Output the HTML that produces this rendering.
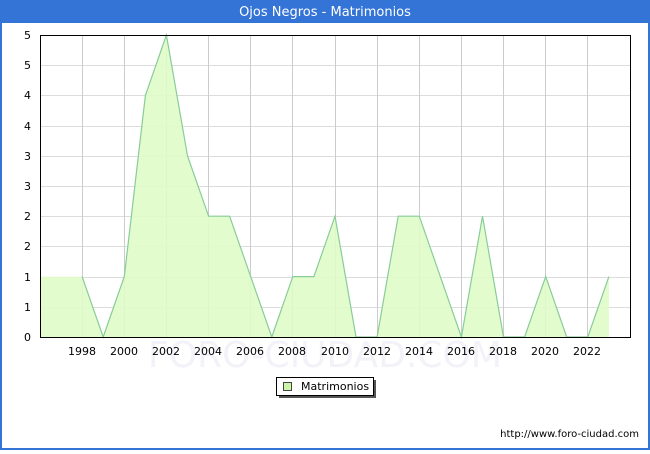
<!DOCTYPE html>
<html><head><meta charset="utf-8"><style>
body{margin:0;width:650px;height:450px;overflow:hidden;background:#fff;font-family:"DejaVu Sans","Liberation Sans",sans-serif}
</style></head><body>
<svg width="650" height="450" xmlns="http://www.w3.org/2000/svg" font-family="DejaVu Sans, Liberation Sans, sans-serif">
<rect x="0" y="0" width="650" height="450" fill="#3374d6"/>
<rect x="2" y="23" width="646" height="425" fill="#fff"/>
<text x="325" y="16" font-size="13" fill="#fff" text-anchor="middle">Ojos Negros - Matrimonios</text>
<text x="325" y="367" font-size="36" fill="#f2f2f8" text-anchor="middle">FORO-CIUDAD.COM</text>
<g stroke="#dcdcdc" stroke-width="1">
<line x1="40" x2="630" y1="307.5" y2="307.5"/><line x1="40" x2="630" y1="277.5" y2="277.5"/><line x1="40" x2="630" y1="246.5" y2="246.5"/><line x1="40" x2="630" y1="216.5" y2="216.5"/><line x1="40" x2="630" y1="186.5" y2="186.5"/><line x1="40" x2="630" y1="156.5" y2="156.5"/><line x1="40" x2="630" y1="126.5" y2="126.5"/><line x1="40" x2="630" y1="95.5" y2="95.5"/><line x1="40" x2="630" y1="65.5" y2="65.5"/>
</g>
<g stroke="#cccccc" stroke-width="1">
<line x1="82.5" x2="82.5" y1="35" y2="337"/><line x1="124.5" x2="124.5" y1="35" y2="337"/><line x1="166.5" x2="166.5" y1="35" y2="337"/><line x1="208.5" x2="208.5" y1="35" y2="337"/><line x1="250.5" x2="250.5" y1="35" y2="337"/><line x1="292.5" x2="292.5" y1="35" y2="337"/><line x1="335.5" x2="335.5" y1="35" y2="337"/><line x1="377.5" x2="377.5" y1="35" y2="337"/><line x1="419.5" x2="419.5" y1="35" y2="337"/><line x1="461.5" x2="461.5" y1="35" y2="337"/><line x1="503.5" x2="503.5" y1="35" y2="337"/><line x1="545.5" x2="545.5" y1="35" y2="337"/><line x1="587.5" x2="587.5" y1="35" y2="337"/>
</g>
<polygon fill="#e0fcc8" fill-opacity="0.9" points="40,337 40,276.6 61.1,276.6 82.1,276.6 103.2,337 124.3,276.6 145.4,95.4 166.4,35 187.5,155.8 208.6,216.2 229.6,216.2 250.7,276.6 271.8,337 292.8,276.6 313.9,276.6 335,216.2 356,337 377.1,337 398.2,216.2 419.3,216.2 440.3,276.6 461.4,337 482.5,216.2 503.5,337 524.6,337 545.7,276.6 566.7,337 587.8,337 608.9,276.6 608.9,337"/>
<polyline fill="none" stroke="#88cc99" stroke-width="1.2" points="82.1,276.6 103.2,337 124.3,276.6 145.4,95.4 166.4,35 187.5,155.8 208.6,216.2 229.6,216.2 250.7,276.6 271.8,337 292.8,276.6 313.9,276.6 335,216.2 356,337 377.1,337 398.2,216.2 419.3,216.2 440.3,276.6 461.4,337 482.5,216.2 503.5,337 524.6,337 545.7,276.6 566.7,337 587.8,337 608.9,276.6"/>
<rect x="40.5" y="35.5" width="590" height="302" fill="none" stroke="#000" stroke-width="1"/>
<g font-size="11" fill="#000" text-anchor="end">
<text x="31" y="341">0</text><text x="31" y="311">1</text><text x="31" y="281">1</text><text x="31" y="250">2</text><text x="31" y="220">2</text><text x="31" y="190">3</text><text x="31" y="160">3</text><text x="31" y="130">4</text><text x="31" y="99">4</text><text x="31" y="69">5</text><text x="31" y="39">5</text>
</g>
<g font-size="11" fill="#000" text-anchor="middle">
<text x="82" y="355">1998</text><text x="124" y="355">2000</text><text x="166" y="355">2002</text><text x="208" y="355">2004</text><text x="250" y="355">2006</text><text x="292" y="355">2008</text><text x="335" y="355">2010</text><text x="377" y="355">2012</text><text x="419" y="355">2014</text><text x="461" y="355">2016</text><text x="503" y="355">2018</text><text x="545" y="355">2020</text><text x="587" y="355">2022</text>
</g>
<rect x="279" y="380" width="97" height="18" fill="#555"/>
<rect x="276.5" y="377.5" width="97" height="18" fill="#fff" stroke="#000"/>
<rect x="283.5" y="382.5" width="8" height="8" fill="#ccf5a8" stroke="#444"/>
<text x="301" y="390" font-size="11">Matrimonios</text>
<text x="639" y="437" font-size="10" text-anchor="end">http://www.foro-ciudad.com</text>
</svg>
</body></html>
